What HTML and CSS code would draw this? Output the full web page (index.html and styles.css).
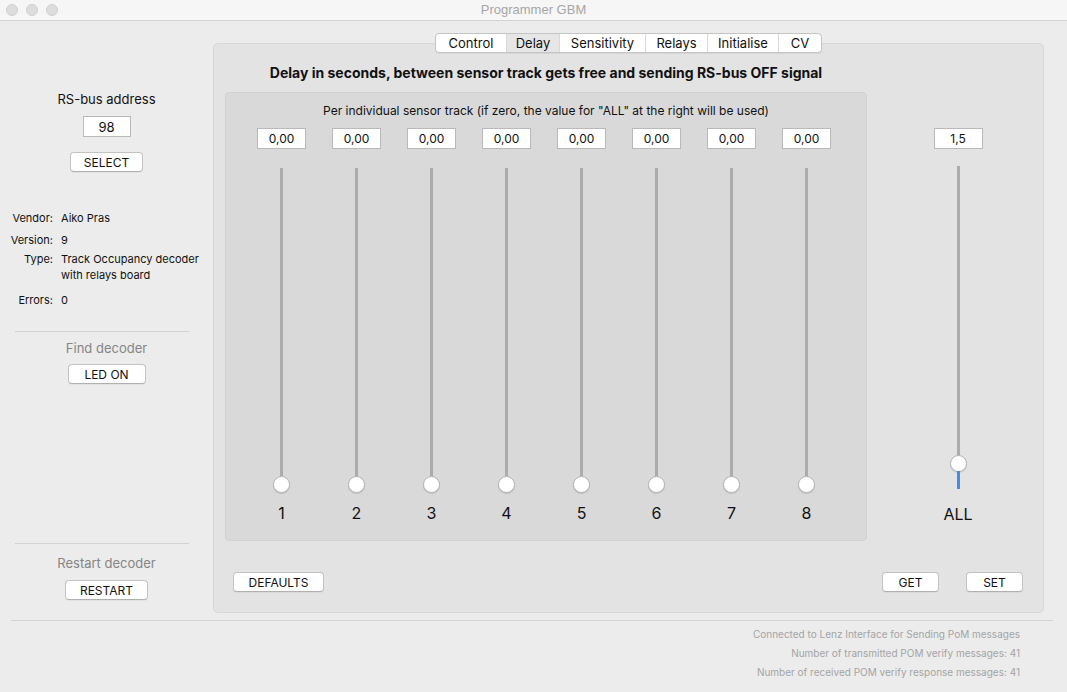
FILE: index.html
```html
<!DOCTYPE html>
<html>
<head>
<meta charset="utf-8">
<link rel="stylesheet" href="styles.css">
</head>
<body>
<div class="window">
  <div class="titlebar">
    <div class="lights"><span class="light"></span><span class="light"></span><span class="light"></span></div>
    <div class="title">Programmer GBM</div>
  </div>
  <div class="main">
    <aside class="sidebar">
      <div class="side-title">RS-bus address</div>
      <div class="field addr">98</div>
      <button class="btn select">SELECT</button>
      <div class="info">
        <div class="row r1"><span class="lbl">Vendor:</span><span class="val">Aiko Pras</span></div>
        <div class="row r2"><span class="lbl">Version:</span><span class="val">9</span></div>
        <div class="row r3"><span class="lbl">Type:</span><span class="val two">Track Occupancy decoder<br>with relays board</span></div>
        <div class="row r4"><span class="lbl">Errors:</span><span class="val">0</span></div>
      </div>
      <div class="sep sep1"></div>
      <div class="side-sub">Find decoder</div>
      <button class="btn led">LED ON</button>
      <div class="sep sep2"></div>
      <div class="side-sub restart-title">Restart decoder</div>
      <button class="btn restart">RESTART</button>
    </aside>
    <section class="tabview">
      <div class="tabs">
        <div class="tab w-control">Control</div>
        <div class="tab w-delay active">Delay</div>
        <div class="tab w-sens">Sensitivity</div>
        <div class="tab w-relays">Relays</div>
        <div class="tab w-init">Initialise</div>
        <div class="tab w-cv">CV</div>
      </div>
      <div class="panel">
        <div class="content">
          <div class="leftcol">
            <h1 class="heading">Delay in seconds, between sensor track gets free and sending RS-bus OFF signal</h1>
            <div class="innerbox">
              <div class="subtitle">Per individual sensor track (if zero, the value for "ALL" at the right will be used)</div>
              <div class="sliders">
                <div class="col"><div class="field num">0,00</div><div class="track"></div><div class="knob"></div><div class="clabel">1</div></div>
                <div class="col"><div class="field num">0,00</div><div class="track"></div><div class="knob"></div><div class="clabel">2</div></div>
                <div class="col"><div class="field num">0,00</div><div class="track"></div><div class="knob"></div><div class="clabel">3</div></div>
                <div class="col"><div class="field num">0,00</div><div class="track"></div><div class="knob"></div><div class="clabel">4</div></div>
                <div class="col"><div class="field num">0,00</div><div class="track"></div><div class="knob"></div><div class="clabel">5</div></div>
                <div class="col"><div class="field num">0,00</div><div class="track"></div><div class="knob"></div><div class="clabel">6</div></div>
                <div class="col"><div class="field num">0,00</div><div class="track"></div><div class="knob"></div><div class="clabel">7</div></div>
                <div class="col"><div class="field num">0,00</div><div class="track"></div><div class="knob"></div><div class="clabel">8</div></div>
              </div>
            </div>
          </div>
          <div class="allcol">
            <div class="field num">1,5</div>
            <div class="track all-top"></div>
            <div class="knob"></div>
            <div class="track all-fill"></div>
            <div class="clabel all-label">ALL</div>
          </div>
        </div>
        <div class="buttons">
          <button class="btn defaults">DEFAULTS</button>
          <div class="spacer"></div>
          <button class="btn small">GET</button>
          <button class="btn small set">SET</button>
        </div>
      </div>
    </section>
  </div>
  <div class="bottom-sep"></div>
  <div class="status">
    <div>Connected to Lenz Interface for Sending PoM messages</div>
    <div>Number of transmitted POM verify messages: 41</div>
    <div>Number of received POM verify response messages: 41</div>
  </div>
</div>
</body>
</html>
```

FILE: styles.css
```css
* { box-sizing: border-box; }
html, body { margin: 0; padding: 0; }
body {
  width: 1067px;
  height: 692px;
  background: #ececec;
  font-family: Inter, "Liberation Sans", Arial, sans-serif;
  color: #111;
  overflow: hidden;
}
.window { width: 1067px; height: 692px; background: #ececec; }

.titlebar {
  height: 21px;
  background: #f6f6f6;
  border-bottom: 1px solid #d3d3d3;
  display: flex;
  align-items: center;
  position: relative;
}
.lights { display: flex; gap: 8px; padding-left: 6px; position: absolute; left: 0; top: 4px; }
.light {
  width: 12px; height: 12px; border-radius: 50%;
  background: #dddddd; border: 1px solid #d0d0d0;
}
.title {
  flex: 1; text-align: center; font-size: 13px; color: #a6a6a6; line-height: 20px;
  font-family: "Liberation Sans", Arial, sans-serif;
}

.main { display: flex; height: 592px; }

.sidebar {
  width: 213px;
  display: flex;
  flex-direction: column;
  align-items: center;
}
.side-title { margin-top: 70px; font-size: 13px; line-height: 16px; }
.field {
  background: #fff;
  border: 1px solid #b9b9b9;
  font-size: 13px;
  text-align: center;
  line-height: 20px;
  height: 21px;
}
.addr { width: 48px; margin-top: 9px; }
.btn {
  font-family: Inter, "Liberation Sans", Arial, sans-serif;
  font-size: 12px;
  background: #fff;
  border: 1px solid #c3c3c3;
  border-bottom-color: #b0b0b0;
  border-radius: 4px;
  height: 20px;
  padding: 0;
  color: #111;
  box-shadow: 0 1px 0 rgba(0,0,0,0.04);
}
.select { width: 73px; margin-top: 15px; }
.info { align-self: stretch; margin-top: 39px; font-size: 11px; }
.row { display: flex; line-height: 14px; }
.lbl { width: 53px; text-align: right; }
.val { margin-left: 8px; }
.val.two { line-height: 16px; }
.r2 { margin-top: 8px; }
.r3 { margin-top: 4px; line-height: 16px; }
.r4 { margin-top: 10px; }
.sep { align-self: flex-start; margin-left: 15px; width: 174px; height: 1px; background: #d2d2d2; }
.sep1 { margin-top: 24px; }
.side-sub { font-size: 13px; line-height: 16px; color: #858585; margin-top: 8px; }
.led { width: 78px; margin-top: 8px; }
.sep2 { margin-top: 159px; }
.restart-title { margin-top: 11px; }
.restart { width: 83px; margin-top: 9px; }

.tabview { width: 831px; display: flex; flex-direction: column; align-items: center; }
.tabs {
  margin-top: 12px;
  height: 20px;
  display: flex;
  background: #fff;
  border: 1px solid #c4c4c4;
  border-radius: 4px;
  position: relative;
  z-index: 1;
  overflow: hidden;
  box-shadow: 0 1px 0 rgba(0,0,0,0.05);
}
.tab {
  font-size: 13px;
  line-height: 18px;
  text-align: center;
  border-left: 1px solid #dadada;
}
.tab:first-child { border-left: none; }
.tab.active { background: #e6e6e6; }
.w-control { width: 70px; }
.w-delay { width: 53px; }
.w-sens { width: 86px; }
.w-relays { width: 62px; }
.w-init { width: 71px; }
.w-cv { width: 43px; }

.panel {
  width: 831px;
  height: 570px;
  margin-top: -10px;
  background: #e3e3e3;
  border: 1px solid #d8d8d8;
  border-radius: 5px;
  display: flex;
  flex-direction: column;
}
.content { display: flex; padding-left: 11px; }
.leftcol { width: 642px; display: flex; flex-direction: column; }
.heading {
  margin: 21px 0 0 0;
  font-size: 14px;
  line-height: 16px;
  font-weight: bold;
  text-align: center;
  color: #111;
  white-space: nowrap;
}
.innerbox {
  margin-top: 11px;
  height: 449px;
  background: #d9d9d9;
  border: 1px solid #d1d1d1;
  border-radius: 4px;
  padding-top: 10px;
}
.subtitle { font-size: 12px; line-height: 15px; text-align: center; }
.sliders {
  display: grid;
  grid-template-columns: repeat(8, 75px);
  margin-top: 10px;
  padding-left: 18px;
}
.col { display: flex; flex-direction: column; align-items: center; }
.num { width: 49px; font-size: 12px; }
.track { width: 3px; background: #acacac; }
.col .track { margin-top: 19px; height: 309px; }
.knob {
  width: 17px; height: 17px; border-radius: 50%;
  background: #fff;
  border: 1px solid #b3b3b3;
  box-shadow: 0 1px 1px rgba(0,0,0,0.12);
  margin: -1px 0 -1px 0;
}
.clabel { font-size: 16px; line-height: 20px; margin-top: 11px; }

.allcol {
  width: 80px;
  margin-left: 51px;
  display: flex;
  flex-direction: column;
  align-items: center;
  padding-top: 84px;
}
.all-top { margin-top: 17px; height: 290px; }
.all-fill { height: 18px; background: #3f8fe6; }
.all-label { margin-top: 15px; }

.buttons {
  display: flex;
  margin-top: 31px;
  padding: 0 20px 0 19px;
}
.defaults { width: 91px; }
.spacer { flex: 1; }
.small { width: 57px; }
.set { margin-left: 27px; }

.bottom-sep { margin: 7px 14px 0 11px; height: 1px; background: #d5d5d5; }
.status {
  margin-top: 4px;
  padding-right: 47px;
  text-align: right;
  font-size: 10px;
  line-height: 19px;
  color: #a4a4a4;
}
```
